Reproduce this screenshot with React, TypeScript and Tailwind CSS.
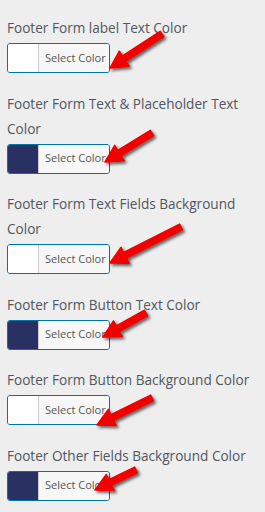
import React from "react";

type Item = { label: string[]; color: string };

const items: Item[] = [
  { label: ["Footer Form label Text Color"], color: "#ffffff" },
  { label: ["Footer Form Text & Placeholder Text", "Color"], color: "#283162" },
  { label: ["Footer Form Text Fields Background", "Color"], color: "#ffffff" },
  { label: ["Footer Form Button Text Color"], color: "#283162" },
  { label: ["Footer Form Button Background Color"], color: "#ffffff" },
  { label: ["Footer Other Fields Background Color"], color: "#283162" },
];

const arrows: [number, number, number, number][] = [
  [162, 34, 110, 68],
  [152, 133, 105, 162],
  [181, 227, 110, 263],
  [146, 313, 103, 337],
  [152, 398, 97, 425],
  [136, 470, 95, 490],
];

function arrowPoints(x1: number, y1: number, x2: number, y2: number) {
  const dx = x2 - x1;
  const dy = y2 - y1;
  const len = Math.hypot(dx, dy);
  const ux = dx / len;
  const uy = dy / len;
  const px = -uy;
  const py = ux;
  const headLen = 17;
  const headW = 9;
  const shaftW = 3.2;
  const bx = x2 - ux * headLen;
  const by = y2 - uy * headLen;
  const pts = [
    [x1 + px * shaftW, y1 + py * shaftW],
    [bx + px * shaftW, by + py * shaftW],
    [bx + px * headW, by + py * headW],
    [x2, y2],
    [bx - px * headW, by - py * headW],
    [bx - px * shaftW, by - py * shaftW],
    [x1 - px * shaftW, y1 - py * shaftW],
  ];
  return pts.map((p) => p.map((v) => v.toFixed(1)).join(",")).join(" ");
}

export default function App() {
  return (
    <div
      className="relative w-[265px] h-[512px] bg-[#eeeeee] overflow-hidden pt-[15px] pl-[7px]"
      style={{ fontFamily: '"Open Sans", "Liberation Sans", sans-serif' }}
    >
      {items.map((it, i) => (
        <div key={i} className="mb-[17.5px]">
          <div className="text-[13.6px] leading-[25px] text-[#50575e] mb-[3px] whitespace-nowrap">
            {it.label.map((l, j) => (
              <div key={j}>{l}</div>
            ))}
          </div>
          <div className="flex w-[103px] h-[30px] border border-[#0073aa] rounded-[3px] overflow-hidden">
            <div className="w-[31px] h-full border-r border-[#cccccc]" style={{ backgroundColor: it.color }} />
            <div className="flex-1 bg-[#f7f7f7] flex items-center pl-[6px] text-[11px] text-[#555555]">
              Select Color
            </div>
          </div>
        </div>
      ))}
      <svg className="absolute left-0 top-0 pointer-events-none" width="265" height="512" viewBox="0 0 265 512">
        <defs>
          <filter id="sh" x="-20%" y="-20%" width="140%" height="140%">
            <feDropShadow dx="2" dy="2" stdDeviation="1.5" floodColor="#000" floodOpacity="0.6" />
          </filter>
        </defs>
        {arrows.map((a, i) => (
          <polygon
            key={i}
            points={arrowPoints(a[0], a[1], a[2], a[3])}
            fill="#f20000"
            stroke="#f20000"
            strokeWidth="1.5"
            strokeLinejoin="round"
            filter="url(#sh)"
          />
        ))}
      </svg>
    </div>
  );
}
